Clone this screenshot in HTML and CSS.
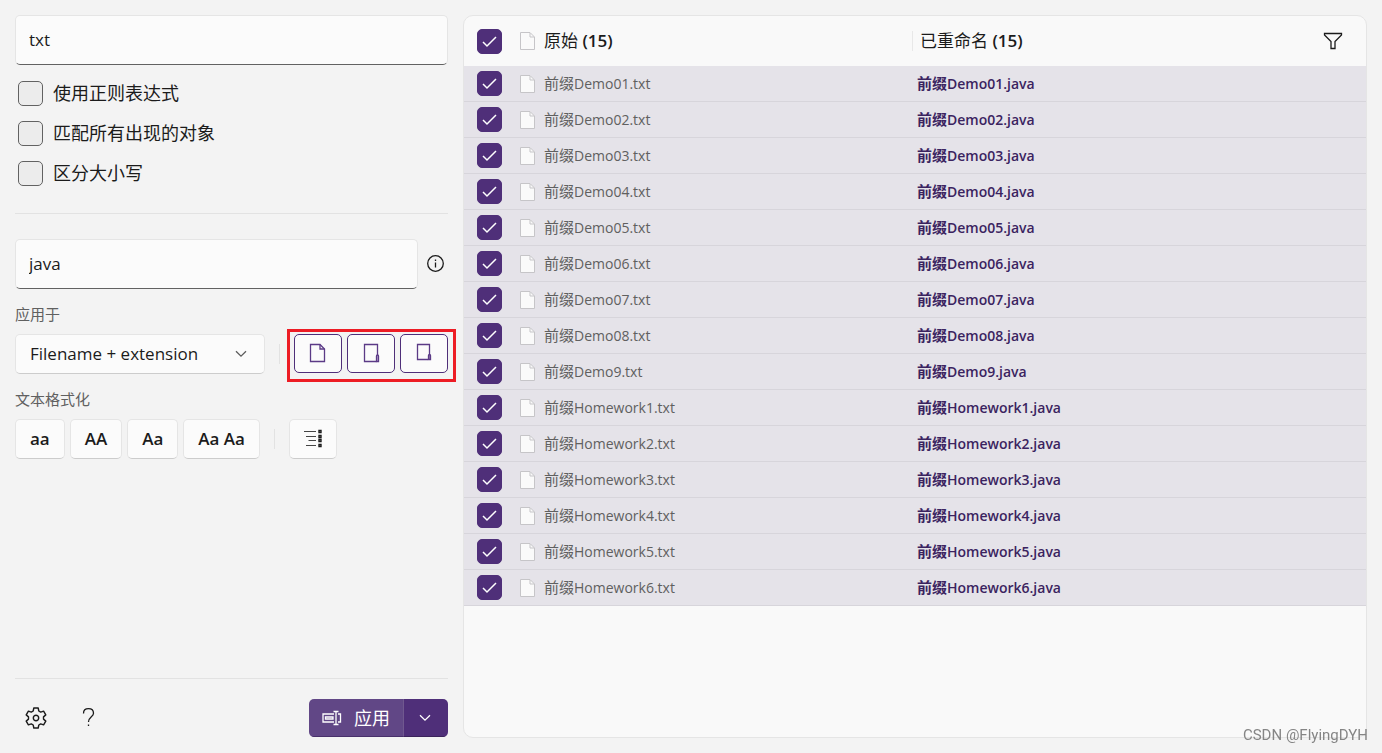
FILE: index.html
```html
<!DOCTYPE html>
<html lang="zh-CN">
<head>
<meta charset="utf-8">
<meta name="viewport" content="width=device-width, initial-scale=1">
<title>PowerRename</title>
<link rel="stylesheet" href="styles.css">
</head>
<body>
<svg class="sprite" aria-hidden="true">
  <symbol id="page" viewBox="0 0 16 20"><path d="M.5 1.500H10L14.500 6V18.500H.5Z" fill="#fafafa" stroke="#c6c5c8"/><path d="M10 2V6H14" fill="none" stroke="#c6c5c8"/></symbol>
</svg>
<div class="app">
  <aside class="side">
    <input class="field" type="text" value="txt" aria-label="搜索">
    <div class="options">
      <label class="option"><input class="check" type="checkbox">使用正则表达式</label>
      <label class="option"><input class="check" type="checkbox">匹配所有出现的对象</label>
      <label class="option"><input class="check" type="checkbox">区分大小写</label>
    </div>
    <hr class="rule">
    <div class="replace">
      <input class="field" type="text" value="java" aria-label="替换为">
      <button class="plain" type="button" aria-label="信息">
        <svg width="18" height="18" viewBox="0 0 18 18" fill="none" stroke="#1b1b1b" stroke-width="1.300"><circle cx="8.500" cy="8.500" r="7.800"/><path d="M8.500 7.500V12.500M8.500 4.500V6"/></svg>
      </button>
    </div>
    <label class="caption" for="scope">应用于</label>
    <div class="tools">
      <div class="picker">
        <select id="scope" class="select"><option>Filename + extension</option></select>
        <svg class="picker-arrow" width="12" height="8" viewBox="0 0 12 8" fill="none" stroke="#5c5c5c" stroke-width="1.300"><path d="M1 1.200L6 6.200L11 1.200"/></svg>
      </div>
      <span class="divider"></span>
      <div class="targets">
        <button class="target" type="button" aria-label="包括文件" aria-pressed="true">
          <svg width="20" height="20" viewBox="0 0 20 20" fill="none" stroke="#5b3a86" stroke-width="1.300"><path d="M2.500 1.500H12L16.500 6V18.500H2.500Z"/><path d="M12 1.500V6H16.500"/></svg>
        </button>
        <button class="target" type="button" aria-label="包括文件夹" aria-pressed="true">
          <svg width="20" height="20" viewBox="0 0 20 20" fill="none" stroke="#5b3a86" stroke-width="1.300"><path d="M16.500 12V1.500H3.500V18.500H15.500"/><path d="M15.500 13Q15.500 12 16.500 12T17.500 13V18.500H15.500Z" fill="#b9a8cf"/></svg>
        </button>
        <button class="target" type="button" aria-label="包括子文件夹" aria-pressed="true">
          <svg width="20" height="20" viewBox="0 0 20 20" fill="none" stroke="#5b3a86" stroke-width="1.300"><path d="M15.500 11V1.500H3.500V16.500H14"/><path d="M14.500 12.500Q14.500 11.500 15.500 11.500T16.500 12.500V16.500H14.500Z" fill="#8e75b0"/></svg>
        </button>
      </div>
    </div>
    <div class="caption">文本格式化</div>
    <div class="tools formats">
      <button class="btn" type="button">aa</button>
      <button class="btn" type="button">AA</button>
      <button class="btn" type="button">Aa</button>
      <button class="btn" type="button">Aa Aa</button>
      <span class="divider"></span>
      <button class="btn list" type="button" aria-label="枚举项目">
        <svg width="20" height="20" viewBox="0 0 20 20" fill="none" stroke="#444"><path d="M1 2.500H13M3 7.500H13M5.500 11.500H13M3 16.500H13"/><path d="M16 1.500h2v2h-2zM16 6.500h2v2h-2zM16 10.500h2v2h-2zM16 15.500h2v2h-2z" stroke="#1b1b1b" stroke-width="1.400"/></svg>
      </button>
    </div>
    <footer class="footer">
      <button class="plain" type="button" aria-label="设置">
        <svg width="22" height="22" viewBox="-11 -11 22 22" fill="none" stroke="#1b1b1b" stroke-width="1.400" stroke-linejoin="round"><path d="M-2.800-7L-2.200-10H2.200L2.800-7L4.700-5.900L7.600-6.900L9.800-3.100L7.500-1.100V1.100L9.800 3.100L7.600 6.900L4.700 5.900L2.800 7L2.200 10H-2.200L-2.800 7L-4.700 5.900L-7.600 6.900L-9.800 3.100L-7.500 1.100V-1.100L-9.800-3.100L-7.600-6.900L-4.700-5.900Z"/><circle r="2.700"/></svg>
      </button>
      <button class="plain" type="button" aria-label="帮助">
        <svg width="22" height="22" viewBox="0 0 22 22" fill="none" stroke="#1b1b1b" stroke-width="1.300"><path d="M5.500 6.500C5.500 3.500 7.500 1.700 10.500 1.700S15.500 3.500 15.500 6.300C15.500 9.800 10.500 10 10.500 15M10.500 17.500V19"/></svg>
      </button>
      <div class="split">
        <button class="apply" type="button">
          <svg width="20" height="16" viewBox="0 0 20 16" fill="none" stroke="#fff" stroke-width="1.300"><path d="M12 4H1V12H12M16 4H18.500V12H16M3.500 7H11V9H3.500ZM11.500 1.500H16.500M11.500 14.500H16.500M14 1.500V14.500"/></svg>应用</button>
        <button class="more" type="button" aria-label="更多">
          <svg width="12" height="8" viewBox="0 0 12 8" fill="none" stroke="#fff" stroke-width="1.300"><path d="M1 1.200L6 6.200L11 1.200"/></svg>
        </button>
      </div>
    </footer>
  </aside>
  <main class="panel">
    <table class="files">
      <colgroup><col class="col-check"><col class="col-name"><col></colgroup>
      <thead>
        <tr>
          <th><input class="check" type="checkbox" checked aria-label="全选"></th>
          <th><span class="name"><svg width="16" height="20"><use href="#page"/></svg><span>原始 <b>(15)</b></span></span></th>
          <th><span class="renamed"><span class="renamed-title">已重命名 <b>(15)</b></span>
            <button class="plain" type="button" aria-label="筛选"><svg width="20" height="18" viewBox="0 0 20 18" fill="none" stroke="#1b1b1b" stroke-width="1.300"><path d="M1.500 1.500H18.500V3L12 9.500V16.500H8V9.500L1.500 3Z"/></svg></button></span></th>
        </tr>
      </thead>
      <tbody id="rows"></tbody>
    </table>
  </main>
</div>
<div class="watermark">CSDN @FlyingDYH</div>
<script src="app.js"></script>
</body>
</html>
```

FILE: styles.css
```css
* { box-sizing: border-box; }

body {
  margin: 0;
  background: #f3f3f3;
  color: #1b1b1b;
  font: 18px/24px "Open Sans", "Noto Sans CJK SC", sans-serif;
}

button, input, select { font: inherit; color: inherit; margin: 0; }
svg { display: block; flex: none; }
.sprite { position: absolute; width: 0; height: 0; }

.app {
  display: grid;
  grid-template-columns: 433px minmax(0, 1fr);
  gap: 15px;
  min-height: 100vh;
  padding: 15px;
}

.side { display: flex; flex-direction: column; }

.field {
  width: 100%;
  min-width: 0;
  height: 50px;
  padding: 0 13px 2px;
  border: 1px solid #e5e5e5;
  border-bottom-color: #626262;
  border-radius: 5px;
  background: #fbfbfb;
  font-size: 17px;
}

.options { margin-top: 8px; }
.option {
  display: flex;
  align-items: center;
  gap: 10px;
  height: 40px;
  padding-left: 3px;
}

.check {
  appearance: none;
  display: block;
  flex: none;
  width: 25px;
  height: 25px;
  border: 1px solid #626262;
  border-radius: 5px;
  background: #ececec;
}
.check:checked {
  border-color: #4f2f79;
  background: #4f2f79 url("data:image/svg+xml,%3Csvg xmlns='http://www.w3.org/2000/svg' viewBox='0 0 25 25'%3E%3Cpath d='M6 13l4 4 9-9' fill='none' stroke='white' stroke-width='1.500'/%3E%3C/svg%3E") center / 25px 25px;
}

.rule {
  width: 100%;
  height: 1px;
  margin: 20px 0 25px;
  border: 0;
  background: #e2e2e2;
}

.plain {
  display: flex;
  align-items: center;
  justify-content: center;
  padding: 0;
  border: 0;
  background: none;
}

.replace { display: flex; align-items: center; gap: 9px; padding-right: 3px; }

.caption {
  margin: 15px 0 10px;
  color: #606060;
  font-size: 15px;
  line-height: 20px;
}

.tools { display: flex; align-items: center; }
.picker { position: relative; flex: 1; }
.select {
  appearance: none;
  display: block;
  width: 100%;
  height: 40px;
  padding: 0 14px;
  border: 1px solid #e5e5e5;
  border-bottom-color: #cccccc;
  border-radius: 5px;
  background: #fbfbfb;
  font-size: 17px;
}
.picker-arrow { position: absolute; right: 18px; top: 16px; pointer-events: none; }

.divider { width: 1px; height: 20px; margin: 0 14px; background: #e2e2e2; }

.targets { position: relative; display: flex; align-self: flex-start; gap: 5px; }
.targets::after {
  content: "";
  position: absolute;
  inset: -5px -8px -9px -7px;
  border: 3px solid #ed1c24;
  pointer-events: none;
}
.target {
  display: flex;
  justify-content: center;
  width: 48px;
  height: 39px;
  padding: 8px 0;
  border: 1px solid #4f2f79;
  border-radius: 5px;
  background: #fbfbfb;
}

.formats { gap: 5px; }
.formats .divider { margin: 0 9px; }
.btn {
  height: 40px;
  padding: 0 14px;
  border: 1px solid #e5e5e5;
  border-bottom-color: #cccccc;
  border-radius: 5px;
  background: #fbfbfb;
  font-size: 17px;
  font-weight: 600;
}
.list { padding: 0 13px; }

.footer {
  display: flex;
  align-items: center;
  gap: 31px;
  margin-top: auto;
  padding: 20px 0 1px 10px;
  border-top: 1px solid #e2e2e2;
}

.split {
  display: flex;
  height: 38px;
  margin-left: auto;
  overflow: hidden;
  border-radius: 5px;
  color: #fff;
}
.apply {
  display: flex;
  align-items: center;
  gap: 12px;
  padding: 0 13px;
  border: 0;
  border-bottom: 1px solid #48306a;
  background: #614786;
}
.more {
  width: 45px;
  padding: 0 15px;
  border: 0;
  border-left: 1px solid #70588f;
  border-bottom: 1px solid #3b235b;
  background: #4f2f79;
}

.panel {
  border: 1px solid #e5e5e5;
  border-radius: 10px;
  overflow: hidden;
  background: #f9f9f9;
}

.files { width: 100%; border-collapse: separate; border-spacing: 0; table-layout: fixed; }
.col-check { width: 56px; }
.col-name { width: 392px; }
.files th, .files td { padding: 0; text-align: left; font-weight: 400; }
.files th:first-child, .files td:first-child { padding-left: 13px; }
.files th { height: 50px; font-size: 17px; }
.files b { font-weight: 600; }
.files td {
  height: 36px;
  border-bottom: 1px solid #d7d5db;
  background: #e5e3e9;
  font-size: 14px;
  line-height: 20px;
}
.files tbody .name { color: #606060; }
.files tbody .after { padding-left: 5px; color: #3b2360; font-weight: 600; }
.name { display: flex; align-items: center; gap: 8px; }
.han { font-size: 15px; }
.renamed { display: flex; align-items: center; justify-content: space-between; padding-right: 23px; }
.renamed-title { padding-left: 7px; border-left: 1px solid #e8e8e8; line-height: 20px; }

.watermark {
  position: fixed;
  right: 14px;
  bottom: 8px;
  color: #858585;
  font: 15px/20px Roboto, sans-serif;
}
```

FILE: app.js
```js
const names = [
  "Demo01", "Demo02", "Demo03", "Demo04", "Demo05", "Demo06", "Demo07", "Demo08", "Demo9",
  "Homework1", "Homework2", "Homework3", "Homework4", "Homework5", "Homework6"
];
document.getElementById("rows").innerHTML = names.map((n) => `
<tr>
  <td><input class="check" type="checkbox" checked aria-label="${n}"></td>
  <td><span class="name"><svg width="16" height="20"><use href="#page"/></svg><span><span class="han">前缀</span>${n}.txt</span></span></td>
  <td class="after"><span class="han">前缀</span>${n}.java</td>
</tr>`).join("");
```
